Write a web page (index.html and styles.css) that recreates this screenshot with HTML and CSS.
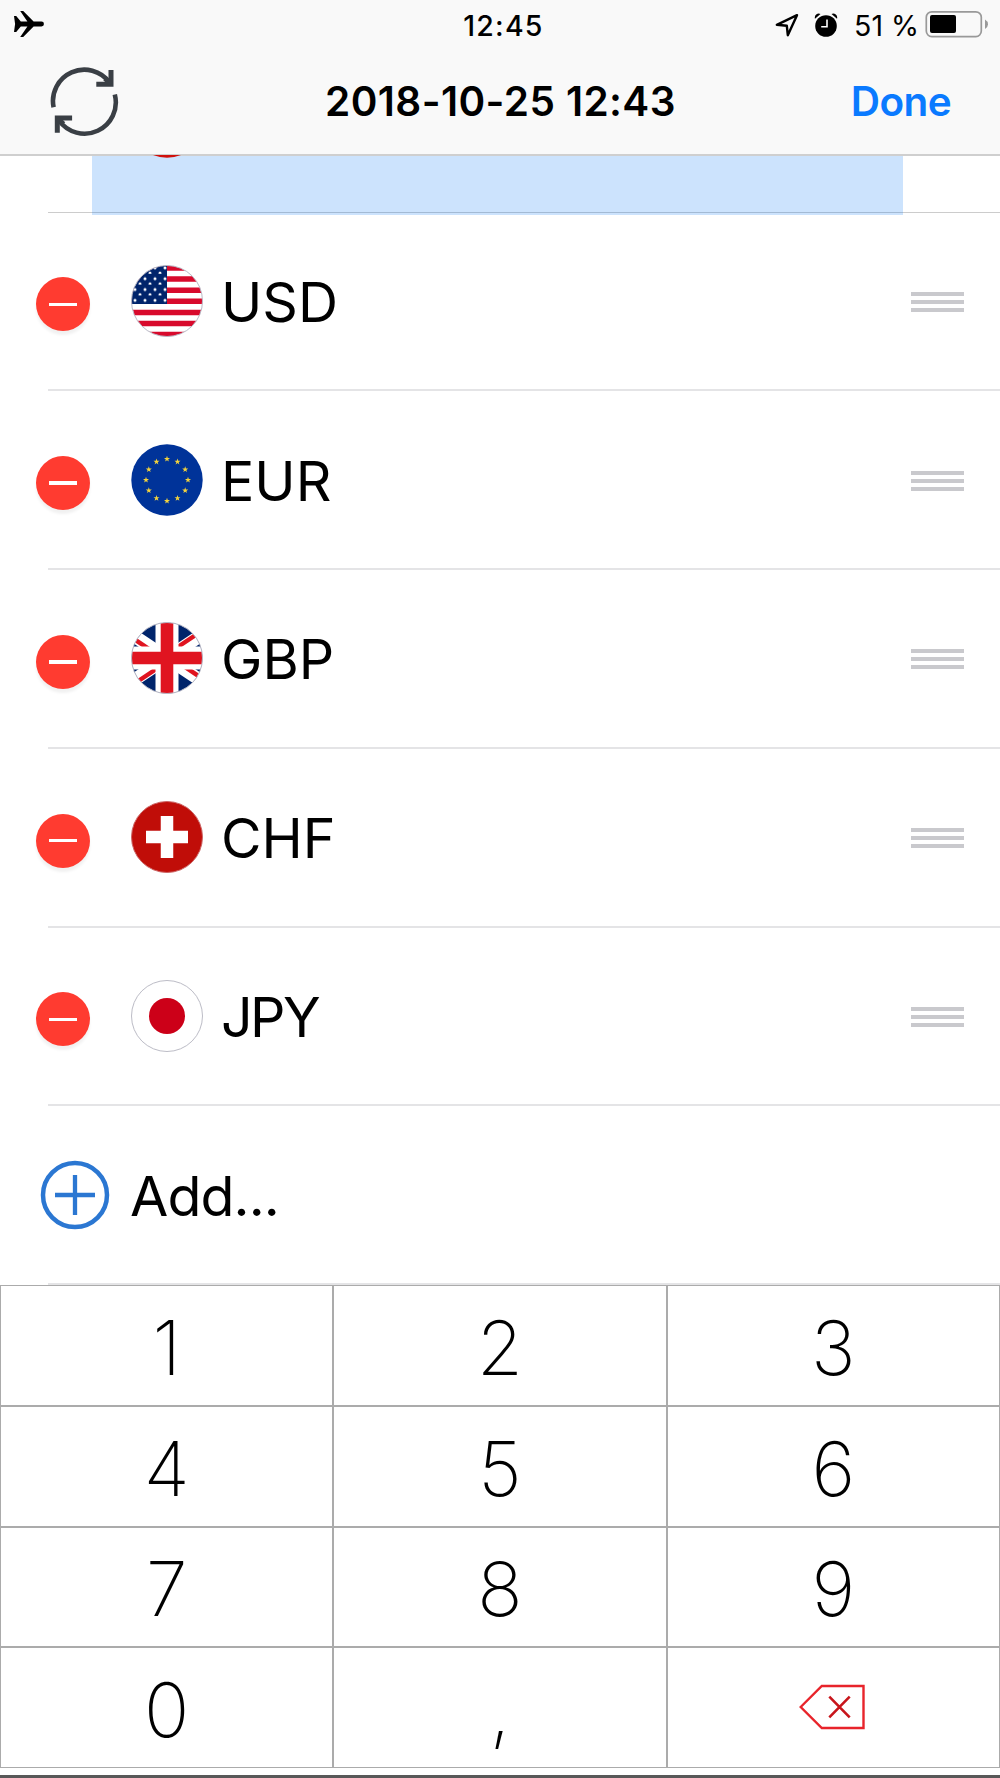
FILE: index.html
```html
<!DOCTYPE html>
<html lang="en">
<head>
<meta charset="utf-8">
<title>Currencies</title>
<link rel="stylesheet" href="styles.css">
</head>
<body>
<div class="screen">
  <header class="header">
    <div class="status">
      <svg class="status-plane" width="32" height="28" viewBox="0 0 32 28"><path d="M1 6h2.200l4.600 5.600h6.600L7.200 1h3L20.600 11.600H28.500a2.400 2.400 0 0 1 0 4.900H20.600L10.200 27h-3l7.200-10.500H7.800L3.200 22H1l1.100-8z"/></svg>
      <span class="status-time">12:45</span>
      <div class="status-right">
        <svg width="24" height="24" viewBox="0 0 24 24"><path d="M22 2.200 1.800 11.800l10 .900 1 9.500z" fill="none" stroke="#000" stroke-width="2.400" stroke-linejoin="round"/></svg>
        <svg class="alarm" width="24" height="24" viewBox="0 0 24 24"><circle cx="12" cy="13" r="10.800"/><path d="M1 5.800A4 4 0 0 1 6.500 1zM23 5.800A4 4 0 0 0 17.500 1z"/><path d="M13 6.500v7.300H7.200" fill="none" stroke="#fff" stroke-width="1.600"/></svg>
        <span class="percent">51 %</span>
        <svg class="battery" width="64" height="28" viewBox="0 0 64 28"><rect x="1.300" y="1.800" width="55" height="24.800" rx="5.500" fill="none" stroke="#999" stroke-width="1.700"/><rect x="5" y="5" width="26" height="18" rx="2"/><path d="M60 9.500q3 1.800 3 4.700t-3 4.700z" fill="#999"/></svg>
      </div>
    </div>
    <div class="navbar">
      <svg class="refresh" width="70" height="70" viewBox="0 0 70 70" fill="none" stroke="#3a3f45" stroke-width="4.600"><path d="M3.600 40.300A31.300 31.300 0 0 1 59.500 15.500"/><path d="M61 3v14.300H46.300" stroke-width="5"/><path d="M55 11.500 61 17.300" stroke-width="5"/><path d="M64.800 27.500A31.300 31.300 0 0 1 9 53.500"/><path d="M7.300 65.800V51h14.800" stroke-width="5"/><path d="M13.500 57 7.500 51.300" stroke-width="5"/></svg>
      <h1 class="title">2018-10-25 12:43</h1>
      <a class="done">Done</a>
    </div>
  </header>

  <main class="list">
    <div class="peek">
      <div class="selection"></div>
      <svg class="peek-flag" width="28" height="4" viewBox="0 0 28 4"><path d="M0 0h28Q14 5.500 0 0z" fill="#d0100c"/></svg>
    </div>
    <div class="row">
      <span class="remove"></span>
      <svg class="flag" viewBox="0 0 72 72">
        <defs>
          <clipPath id="disc"><circle cx="36" cy="36" r="35.500"/></clipPath>
          <pattern id="stars" width="10" height="10.800" patternUnits="userSpaceOnUse" x="2" y="-2"><circle cx="2" cy="5" r="1.500" fill="#fff"/><circle cx="7" cy="10" r="1.500" fill="#fff"/></pattern>
        </defs>
        <g clip-path="url(#disc)"><path fill="#fff" d="M0 0h72v72H0z"/><path d="M0 3h72M0 14.100h72M0 25.200h72M0 36.300h72M0 47.400h72M0 58.500h72M0 69.600h72" stroke="#d80a2c" stroke-width="5.500"/><path fill="#00246b" d="M0 0h36v39H0z"/><path fill="url(#stars)" d="M0 0h36v38H0z"/></g>
        <circle cx="36" cy="36" r="35.500" fill="none" stroke="#b9b9c6"/>
      </svg>
      <span class="code">USD</span>
      <span class="grip"></span>
    </div>
    <div class="row">
      <span class="remove"></span>
      <svg class="flag" viewBox="0 0 72 72">
        <defs><path id="star" d="M0-3.200.750-1H3L1.200.400 1.900 2.600 0 1.250-1.900 2.600-1.200.400-3-1H-.750z" fill="#f3d33c"/></defs>
        <circle cx="36" cy="36" r="35.700" fill="#003399"/>
        <use href="#star" x="36" y="15"/><use href="#star" x="46.500" y="17.800"/><use href="#star" x="54.200" y="25.500"/><use href="#star" x="57" y="36"/><use href="#star" x="54.200" y="46.500"/><use href="#star" x="46.500" y="54.200"/><use href="#star" x="36" y="57"/><use href="#star" x="25.500" y="54.200"/><use href="#star" x="17.800" y="46.500"/><use href="#star" x="15" y="36"/><use href="#star" x="17.800" y="25.500"/><use href="#star" x="25.500" y="17.800"/>
      </svg>
      <span class="code">EUR</span>
      <span class="grip"></span>
    </div>
    <div class="row">
      <span class="remove"></span>
      <svg class="flag" viewBox="0 0 72 72">
        <g clip-path="url(#disc)">
          <path fill="#00246b" d="M0 0h72v72H0z"/>
          <path d="M-18 0 90 72M90 0-18 72" stroke="#fff" stroke-width="13"/>
          <path d="M-19.500 2 31.500 36M34 33.500 89-3.200M91.500 70 40.500 36M38 38.500-17 75.200" stroke="#e01420" stroke-width="4.500"/>
          <path d="M36 0v72M0 36h72" stroke="#fff" stroke-width="23"/>
          <path d="M36 0v72M0 36h72" stroke="#e01420" stroke-width="12.600"/>
        </g>
        <circle cx="36" cy="36" r="35.500" fill="none" stroke="#b9b9c6"/>
      </svg>
      <span class="code">GBP</span>
      <span class="grip"></span>
    </div>
    <div class="row">
      <span class="remove"></span>
      <svg class="flag" viewBox="0 0 72 72"><circle cx="36" cy="36" r="35.500" fill="#c00d08" stroke="#c66"/><path d="M36 15v42M15 36h42" stroke="#fff" stroke-width="12.500"/></svg>
      <span class="code">CHF</span>
      <span class="grip"></span>
    </div>
    <div class="row">
      <span class="remove"></span>
      <svg class="flag" viewBox="0 0 72 72"><circle cx="36" cy="36" r="35.500" fill="#fff" stroke="#bcbcc6"/><circle cx="36" cy="36" r="18" fill="#cc0018"/></svg>
      <span class="code tight">JPY</span>
      <span class="grip"></span>
    </div>
    <div class="row">
      <svg class="plus" width="70" height="70" viewBox="0 0 70 70" fill="none" stroke="#2b77d2" stroke-width="4.500"><circle cx="35" cy="35" r="32"/><path d="M35 15v40M15 35h40" stroke-width="4.300"/></svg>
      <span class="code label">Add...</span>
    </div>
  </main>

  <section class="keypad">
    <button class="key">1</button>
    <button class="key">2</button>
    <button class="key">3</button>
    <button class="key">4</button>
    <button class="key">5</button>
    <button class="key">6</button>
    <button class="key">7</button>
    <button class="key">8</button>
    <button class="key">9</button>
    <button class="key">0</button>
    <button class="key">,</button>
    <button class="key erase"><svg width="66" height="46" viewBox="0 0 66 46" fill="none"><path d="M1.700 23 22.800 2H64.500v42H22.800z" stroke="#e8242b" stroke-width="2.400"/><path d="M30.300 12.700 50.700 33.300M50.700 12.700 30.300 33.300" stroke="#c8151b" stroke-width="2.600"/></svg></button>
  </section>
  <footer class="edge"></footer>
</div>
</body>
</html>
```
FILE: styles.css
```css
* { box-sizing: border-box; }

body {
  margin: 0;
  background: #fff;
  color: #000;
  font-family: Inter, "Liberation Sans", sans-serif;
}

.screen {
  display: flex;
  flex-direction: column;
  width: 1000px;
  height: 1778px;
  overflow: hidden;
}

.header {
  flex: none;
  height: 156px;
  background: #f9f9f9;
  border-bottom: 2px solid #cfcfcf;
}

.status {
  display: grid;
  grid-template-columns: 1fr auto 1fr;
  align-items: center;
  height: 50px;
  padding: 0 11px 0 13px;
}

.status-plane { margin-bottom: 2px; }

.status-time {
  padding-left: 5px;
  font-size: 28.500px;
  font-weight: 500;
  letter-spacing: 1.200px;
}

.status-right {
  display: flex;
  align-items: center;
  justify-content: flex-end;
}

.alarm { margin-left: 15px; }

.percent {
  margin-left: 16px;
  font-size: 28.500px;
  white-space: nowrap;
}

.battery { margin: 0 0 2px 6px; }

.navbar {
  display: grid;
  grid-template-columns: 1fr auto 1fr;
  align-items: center;
  height: 103px;
  padding: 0 49px 0 50px;
}

.title {
  margin: 0;
  font-size: 40.500px;
  font-weight: 600;
  letter-spacing: 0.400px;
}

.done {
  justify-self: end;
  color: #0a7aff;
  font-size: 40.500px;
  font-weight: 600;
  letter-spacing: -0.600px;
}

.list {
  flex: none;
  height: 1129px;
}

.peek {
  position: relative;
  height: 56.500px;
  margin-left: 48px;
  border-bottom: 1px solid #ccc;
}

.selection {
  width: 811px;
  height: 59px;
  margin-left: 44px;
  background: rgba(0, 116, 247, 0.2);
}

.peek-flag {
  position: absolute;
  left: 105px;
  top: -1px;
}

.row {
  position: relative;
  display: flex;
  align-items: center;
  height: 178.750px;
  padding: 0 36px;
}

.row::after {
  content: "";
  position: absolute;
  left: 48px;
  right: 0;
  bottom: 0;
  height: 2px;
  background: #e4e4e6;
}

.remove {
  display: flex;
  align-items: center;
  justify-content: center;
  width: 54px;
  height: 54px;
  margin-top: 5px;
  border-radius: 50%;
  background: #ff3b30;
  box-shadow: 0 4px 3px #f1f1f1;
}

.remove::before {
  content: "";
  width: 28px;
  height: 3.500px;
  background: #fff;
}

.flag {
  width: 72px;
  height: 72px;
  margin: 0 18px 2px 41px;
}

.code {
  font-size: 55.500px;
  line-height: 70px;
}

.tight { letter-spacing: -2.600px; }

.label { letter-spacing: -0.900px; }

.grip {
  width: 53px;
  height: 20px;
  margin-left: auto;
  background: linear-gradient(#c9c9cd 4px, transparent 4px 8px, #c9c9cd 8px 12px, transparent 12px 16px, #c9c9cd 16px);
}

.plus { margin: 0 20px 2px 4px; }

.keypad {
  flex: none;
  display: grid;
  grid-template-columns: repeat(3, 1fr);
  grid-template-rows: repeat(4, 1fr);
  gap: 2px;
  height: 483px;
  padding: 1px;
  background: #ababab;
}

.key {
  display: flex;
  align-items: center;
  justify-content: center;
  padding: 5px 0 0;
  border: 0;
  background: #fff;
  color: #000;
  font-family: Inter, "Liberation Sans", sans-serif;
  font-size: 75px;
  font-weight: 200;
  line-height: 90px;
}

.erase { padding: 0 2px 1px 0; }

.edge {
  margin-top: auto;
  height: 3px;
  background: #585858;
}
```
